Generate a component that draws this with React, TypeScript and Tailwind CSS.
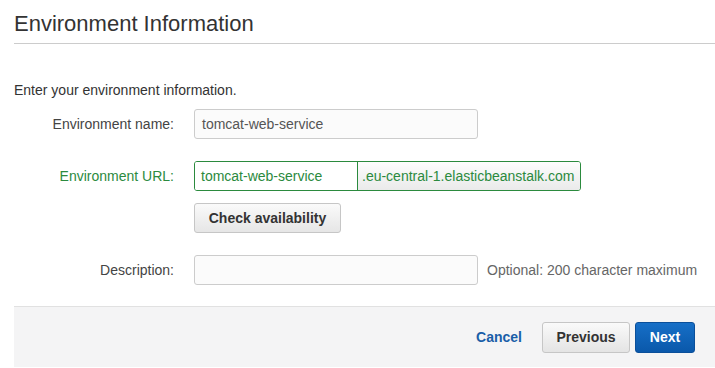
import React from "react";

export default function App() {
  const font = { fontFamily: '"Liberation Sans", Arial, sans-serif' };
  return (
    <div className="w-[715px] h-[368px] bg-white overflow-hidden" style={font}>
      <div className="pl-[14px]">
        <div className="pt-[11px] h-[44px] border-b border-[#cccccc]">
          <h1 className="text-[22px] leading-[26px] text-[#333333]">Environment Information</h1>
        </div>
        <div className="pt-[38px] text-[14px] leading-[16px] text-[#333333]">Enter your environment information.</div>

        <div className="mt-[11px] flex items-center h-[30px]">
          <div className="w-[160px] text-right text-[14px] text-[#444444]">Environment name:</div>
          <div className="ml-[20px] w-[284px] h-[30px] border border-[#cccccc] rounded-[3px] bg-[#fbfbfb] flex items-center px-[7px] text-[14px] text-[#555555]">
            tomcat-web-service
          </div>
        </div>

        <div className="mt-[22px] flex items-center h-[30px]">
          <div className="w-[160px] text-right text-[14px] text-[#2b8a3e]">Environment URL:</div>
          <div className="ml-[20px] flex h-[30px] border border-[#2b8a3e] rounded-[3px] overflow-hidden">
            <div className="w-[163px] bg-white flex items-center px-[6px] text-[14px] text-[#2b8a3e] border-r border-[#2b8a3e]">
              tomcat-web-service
            </div>
            <div className="w-[222px] flex items-center px-[4px] text-[14px] text-[#2b8a3e] bg-gradient-to-b from-[#fdfdfd] to-[#eaeaea]">
              .eu-central-1.elasticbeanstalk.com
            </div>
          </div>
        </div>

        <div className="mt-[12px] ml-[180px] w-[147px] h-[30px] flex items-center justify-center rounded-[3px] border border-[#c6c6c6] bg-gradient-to-b from-[#fafafa] to-[#e6e6e6] text-[14px] font-bold text-[#333333]">
          Check availability
        </div>

        <div className="mt-[22px] flex items-center h-[30px]">
          <div className="w-[160px] text-right text-[14px] text-[#444444]">Description:</div>
          <div className="ml-[20px] w-[284px] h-[30px] border border-[#cccccc] rounded-[3px] bg-[#fbfbfb]"></div>
          <div className="ml-[9px] text-[14px] text-[#666666]">Optional: 200 character maximum</div>
        </div>

        <div className="mt-[21px] h-[61px] border-t border-[#e1e1e1] bg-[#f4f4f5] flex items-center justify-end pr-[20px]">
          <div className="text-[14px] font-bold text-[#1a5ea8] mr-[20px]">Cancel</div>
          <div className="w-[88px] h-[31px] flex items-center justify-center rounded-[3px] border border-[#c6c6c6] bg-gradient-to-b from-[#fafafa] to-[#e4e4e4] text-[14px] font-bold text-[#333333]">
            Previous
          </div>
          <div className="ml-[5px] w-[60px] h-[31px] flex items-center justify-center rounded-[3px] border border-[#0a4f9a] bg-gradient-to-b from-[#166fc7] to-[#0a58aa] text-[14px] font-bold text-white">
            Next
          </div>
        </div>
      </div>
    </div>
  );
}
